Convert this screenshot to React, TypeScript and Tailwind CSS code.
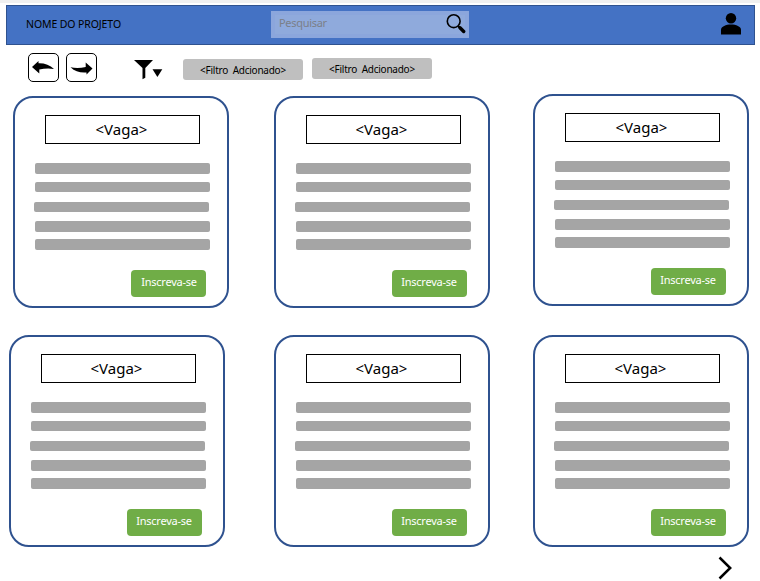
type CardProps = { frame: string; title: string; label: string };

const bars = [
  'ml-5 h-[11px]',
  'ml-5 mt-2 h-[10px]',
  'ml-[19px] mt-[10px] h-[10px]',
  'ml-5 mt-[9px] h-[11px]',
  'ml-5 mt-[7px] h-[11px]',
];

const cards: CardProps[] = [
  { frame: 'ml-[13px] mt-[2px]', title: 'pr-[2px]', label: 'pl-px' },
  { frame: 'ml-[45px] mt-[2px]', title: 'pr-[4px]', label: 'pr-px' },
  { frame: 'ml-[43px]', title: 'pr-[2px]', label: 'pr-px' },
  { frame: 'ml-[9px]', title: 'pr-[4px]', label: 'pr-px' },
  { frame: 'ml-[49px]', title: 'pr-[4px]', label: 'pr-px' },
  { frame: 'ml-[43px]', title: 'pr-[4px]', label: 'pr-px' },
];

function Card({ frame, title, label }: CardProps) {
  return (
    <article className={`h-[212px] w-[216px] shrink-0 rounded-[20px] border-2 border-[#2f528f] bg-white ${frame}`}>
      <h2 className={`ml-[30px] mt-[17px] flex h-[29px] w-[155px] items-center justify-center border border-black text-[15px] leading-none ${title}`}>
        &lt;Vaga&gt;
      </h2>
      <div className="mt-[19px]">
        {bars.map((bar, i) => (
          <div key={i} className={`w-[175px] rounded-[2px] bg-[#a5a5a5] ${bar}`} />
        ))}
      </div>
      <button className={`ml-[116px] mt-5 flex h-[27px] w-[75px] items-center justify-center rounded-[4px] bg-[#70ad47] pb-[5px] text-[11px] leading-none tracking-[-0.25px] text-white ${label}`}>
        Inscreva-se
      </button>
    </article>
  );
}

export default function App() {
  return (
    <div className="h-[581px] w-[760px] overflow-hidden bg-white font-['Noto_Sans','Liberation_Sans',sans-serif] text-black">
      <div className="h-[3px] bg-[#f0f0f0]" />
      <header className="ml-[6px] mt-[2px] flex h-10 w-[749px] items-start border border-[#2f528f] bg-[#4472c4]">
        <h1 className="ml-[19px] mt-[11px] w-[245px] text-[10.5px] leading-[14px] tracking-[-0.1px]">NOME DO PROJETO</h1>
        <div className="mt-[5px] flex h-[27px] w-[198px] justify-between border-4 border-[#8ba6dc] bg-[#8faadc]">
          <span className="ml-1 mt-px text-[11px] leading-[14px] tracking-[-0.3px] text-[#7b7f89]">Pesquisar</span>
          <svg className="-mt-[2px] mr-[-1px] shrink-0" width="20" height="21" viewBox="0 0 20 21" fill="none" stroke="#000">
            <circle cx="7.7" cy="8.2" r="6.4" strokeWidth="1.6" />
            <path d="M12 13l2.2 2" strokeWidth="2" />
            <path d="M14 14.8l3.7 3.7" strokeWidth="3.4" strokeLinecap="round" />
          </svg>
        </div>
        <svg className="ml-[251px] mt-[7px]" width="22" height="22" viewBox="0 0 22 22">
          <circle cx="11" cy="5.2" r="5.2" />
          <path d="M1 21.500v-4.800C1 13.500 6 11.500 11 11.500s10 2 10 5.200v4.800z" />
        </svg>
      </header>

      <nav className="flex h-[49px] items-start pl-7 pt-2">
        <button className="flex h-[29px] w-[31px] items-center justify-center rounded-[5px] border border-black">
          <svg width="23" height="14" viewBox="0 0 23 14">
            <path d="M0 6L6.500 0v2.200C12.500 2 18 4 22 8 17 7 12 7.400 7.300 8.600V12.500z" />
          </svg>
        </button>
        <button className="ml-[7px] flex h-[29px] w-[31px] items-center justify-center rounded-[5px] border border-black">
          <svg width="23" height="14" viewBox="0 0 23 14">
            <path d="M22.500 7.500L16.500 13.500v-2C10 12 5 10.500 .5 6.200c5 1.200 10 .9 15.200-.1V1.500z" />
          </svg>
        </button>
        <svg className="ml-[37px] mt-[7px]" width="29" height="20" viewBox="0 0 29 20">
          <path d="M0 0h19l-7.700 8v9.800l-2.800 1.500V8z" />
          <path d="M18.500 9.200h9.800L23.400 17z" />
        </svg>
        <div className="ml-5 mt-[6px] flex h-[21px] w-[120px] items-center justify-center rounded-[3px] bg-[#bfbfbf] pt-px text-[10px] leading-none tracking-[-0.25px] whitespace-pre">
          {'<Filtro  Adcionado>'}
        </div>
        <div className="ml-[9px] mt-[5px] flex h-[21px] w-[120px] items-center justify-center rounded-[3px] bg-[#bfbfbf] pt-px text-[10px] leading-none tracking-[-0.25px] whitespace-pre">
          {'<Filtro  Adcionado>'}
        </div>
      </nav>

      <main>
        <section className="flex h-[241px] items-start">
          {cards.slice(0, 3).map((card, i) => <Card key={i} {...card} />)}
        </section>
        <section className="flex items-start">
          {cards.slice(3).map((card, i) => <Card key={i} {...card} />)}
        </section>
      </main>

      <button className="ml-[718px] mt-[9px] block">
        <svg width="15" height="25" viewBox="0 0 15 25" fill="none" stroke="#000" strokeWidth="2.500">
          <path d="M1.500 1.500L12.200 12 1.500 22.500" />
        </svg>
      </button>
    </div>
  );
}
